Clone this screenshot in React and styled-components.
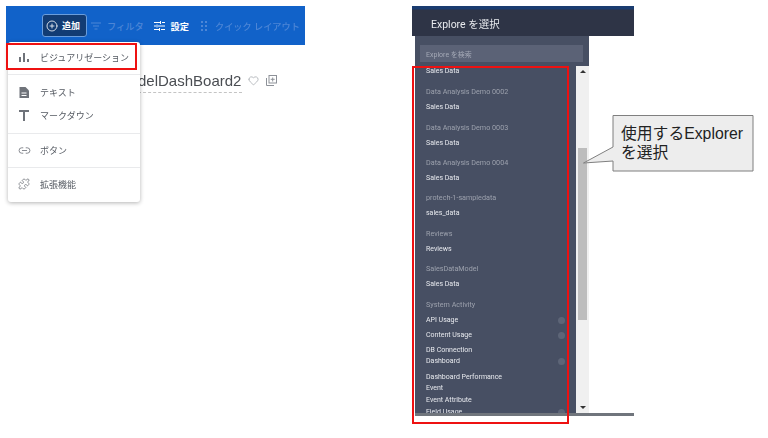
import React from "react";
import styled, { createGlobalStyle } from "styled-components";
import { CirclePlus, Link2, Puzzle, Heart } from "lucide-react";

const Global = createGlobalStyle`
  html, body { margin: 0; padding: 0; background: #fff; }
  body { font-family: Roboto, "Noto Sans CJK JP", sans-serif; }
`;
const Slide = styled.div`
  position: relative; width: 768px; height: 438px; overflow: hidden; background: #fff;
  display: flex; align-items: flex-start; padding-top: 6px; box-sizing: border-box;
`;
const LeftShot = styled.section`
  position: relative; width: 299px; margin-left: 6px; flex: none; filter: blur(.3px);
`;
const Toolbar = styled.div`
  height: 39px; background: #1162c9; display: flex; align-items: center;
  padding: 0 0 0 36px; box-sizing: border-box;
`;
const AddButton = styled.div`
  width: 45px; height: 23px; box-sizing: border-box; background: #123c74; border: 1px solid #6a9ddc; border-radius: 3px;
  display: flex; align-items: center; gap: 4px; padding-left: 3px; color: #fff; font-size: 9px; font-weight: 700;
  margin-right: 4px;
`;
const ToolItem = styled.div`
  display: flex; align-items: center; flex: none; gap: ${p => p.$gap}px; margin-right: ${p => p.$mr}px;
  color: ${p => p.$on ? "#fff" : "#4d86d6"}; font-size: 9.2px; font-weight: ${p => p.$on ? 700 : 500};
  white-space: nowrap;
`;
const TitleRow = styled.div`
  display: flex; align-items: center; padding: 26px 0 0 132px; color: #4a4d52;
`;
const Title = styled.div`
  font-family: "Liberation Sans", sans-serif; font-size: 15px; line-height: 20px; padding-bottom: 1px;
  border-bottom: 1px dashed #c4c4c4; width: 104px; white-space: nowrap;
`;
const TitleIcons = styled.div`
  display: flex; align-items: center; gap: 7px; margin-left: 6px; color: #8d9198; margin-top: -3px;
`;
const Menu = styled.div`
  position: absolute; left: 2px; top: 36px; width: 132px; height: 160px; background: #fff; border-radius: 3px;
  box-shadow: 0 1px 4px rgba(0,0,0,.3); display: flex; flex-direction: column;
`;
const MenuGroup = styled.div`
  display: flex; flex-direction: column; padding: ${p => p.$pad}; gap: 5px;
  & + & { border-top: 1px solid #e9eaec; }
`;
const MenuItem = styled.div`
  height: 18px; display: flex; align-items: center; color: #555a62; font-size: 9px; white-space: nowrap;
`;
const MenuIcon = styled.span`
  width: 32px; flex: none; display: flex; justify-content: center; color: #6f737a;
`;
const RedBox = styled.div`
  position: absolute; border: 2px solid #ee1111; box-sizing: border-box; pointer-events: none;
  left: ${p => p.$l}px; top: ${p => p.$t}px; width: ${p => p.$w}px; height: ${p => p.$h}px;
`;
const RightShot = styled.section`
  width: 222px; margin-left: 107px; flex: none; position: relative; height: 410px; filter: blur(.3px);
`;
const ModalHeader = styled.div`
  height: 30px; background: linear-gradient(#1a3c70 0, #1a3c70 3px, #2e3446 4px); color: #e8eaee;
  font-size: 10.5px; display: flex; align-items: center; padding: 4px 0 0 19px; box-sizing: border-box;
`;
const Body = styled.div`
  margin-left: 3px; width: 174px; height: 377px; background: #474f63; display: flex; flex-direction: column;
`;
const SearchArea = styled.div`
  height: 30px; flex: none; padding: 9px 6px 4px 5px; box-sizing: border-box;
`;
const Search = styled.div`
  height: 17px; background: #5b6276; color: #a4a9b6; font-size: 7px; display: flex; align-items: center; padding-left: 6px;
`;
const ListWrap = styled.div`
  flex: 1; min-height: 0; display: flex;
`;
const List = styled.div`
  width: 161px; flex: none; overflow: hidden; padding-left: 11px; box-sizing: border-box; position: relative;
`;
const Row = styled.div`
  height: 14px; line-height: 14px; margin-top: ${p => p.$pitch - 14}px; font-size: ${p => p.$label ? 7.2 : 7}px;
  color: ${p => p.$label ? "#9ca1ad" : "#e7e9ee"}; white-space: nowrap; display: flex; justify-content: space-between; align-items: center;
  padding-right: 11px;
`;
const Dot = styled.span`
  width: 7px; height: 7px; border-radius: 50%; background: #5d6577;
`;
const Scroll = styled.div`
  width: 13px; flex: none; background: #f0f0f0; display: flex; flex-direction: column; align-items: center; position: relative;
`;
const Arrow = styled.span`
  position: absolute; left: 3.5px; ${p => p.$up ? "top: 4px" : "bottom: 4px"}; width: 0; height: 0;
  border-left: 3px solid transparent; border-right: 3px solid transparent;
  ${p => p.$up ? "border-bottom: 3px solid #333;" : "border-top: 3px solid #333;"}
`;
const Thumb = styled.div`
  position: absolute; left: 2px; top: 82px; width: 9px; height: 172px; background: #bdbdbd;
`;
const BottomBar = styled.div`
  height: 3px; margin-left: 3px; background: #70757c;
`;
const Callout = styled.div`
  position: absolute; left: 583px; top: 115px; width: 171px; height: 57px;
`;
const CalloutText = styled.div`
  position: absolute; left: 38px; top: 9px; font-family: "Liberation Sans", "Noto Sans CJK JP", sans-serif;
  font-size: 15.8px; line-height: 19px; color: #222; white-space: nowrap;
`;

const rows = [
  ["Sales Data", 0, 12],
  ["Data Analysis Demo 0002", 1, 21],
  ["Sales Data", 0, 15],
  ["Data Analysis Demo 0003", 1, 21],
  ["Sales Data", 0, 15],
  ["Data Analysis Demo 0004", 1, 20],
  ["Sales Data", 0, 15],
  ["protech-1-sampledata", 1, 20],
  ["sales_data", 0, 15],
  ["Reviews", 1, 21],
  ["Reviews", 0, 15],
  ["SalesDataModel", 1, 20],
  ["Sales Data", 0, 15],
  ["System Activity", 1, 21],
  ["API Usage", 0, 15, 1],
  ["Content Usage", 0, 15, 1],
  ["DB Connection", 0, 15],
  ["Dashboard", 0, 11, 1],
  ["Dashboard Performance", 0, 16],
  ["Event", 0, 11],
  ["Event Attribute", 0, 12],
  ["Field Usage", 0, 12, 1],
];

const DocIcon = () => (
  <svg width="12" height="13" viewBox="0 0 12 13"><path fill="#6f737a" d="M1.5 1h6L11 4.5V12H1.5z" /><path stroke="#fff" strokeWidth="1" d="M3.5 7h5M3.5 9.5h5" /></svg>
);
const FilterIcon = () => (
  <svg width="10" height="8" viewBox="0 0 10 8"><path stroke="#4d86d6" strokeWidth="1" d="M0 1h10M2 4h6M3.5 7h3" /></svg>
);
const SettingsIcon = () => (
  <svg width="11" height="10" viewBox="0 0 11 10" fill="none" stroke="#fff" strokeWidth="1"><path d="M0 1.5h6M8 1.5h3M0 5h2M4 5h7M0 8.5h5M7 8.5h4M6.5 0v3M3 3.5v3M5.5 7v3" /></svg>
);
const GripIcon = () => (
  <svg width="6" height="10" viewBox="0 0 6 10" fill="#4d86d6"><rect x="0" y="0" width="2" height="2" /><rect x="4" y="0" width="2" height="2" /><rect x="0" y="4" width="2" height="2" /><rect x="4" y="4" width="2" height="2" /><rect x="0" y="8" width="2" height="2" /><rect x="4" y="8" width="2" height="2" /></svg>
);
const BarsIcon = () => (
  <svg width="10" height="10" viewBox="0 0 10 10" fill="#6f737a"><rect x="0" y="5" width="2" height="5" /><rect x="4" y="1" width="2" height="9" /><rect x="8" y="7" width="2" height="3" /></svg>
);
const TIcon = () => (
  <svg width="10" height="11" viewBox="0 0 10 11" fill="#6f737a"><path d="M0 0h10v2H6v9H4V2H0z" /></svg>
);
const CopyIcon = () => (
  <svg width="11" height="11" viewBox="0 0 11 11" fill="none" stroke="#8d9198"><rect x="3" y=".5" width="7.5" height="7.5" /><path d="M.5 3v7.5H8M6.7 2.5v4M4.7 4.3h4" /></svg>
);

export default function App() {
  return (
    <Slide>
      <Global />
      <LeftShot>
        <Toolbar>
          <AddButton><CirclePlus size={12} strokeWidth={1.6} />追加</AddButton>
          <ToolItem $gap={6} $mr={10}><FilterIcon />フィルタ</ToolItem>
          <ToolItem $on $gap={6} $mr={12}><SettingsIcon />設定</ToolItem>
          <ToolItem $gap={8} $mr={0}><GripIcon />クイック レイアウト</ToolItem>
        </Toolbar>
        <TitleRow>
          <Title>delDashBoard2</Title>
          <TitleIcons><Heart size={11} strokeWidth={1.3} /><CopyIcon /></TitleIcons>
        </TitleRow>
        <Menu>
          <MenuGroup $pad="6px 0 8px">
            <MenuItem><MenuIcon><BarsIcon /></MenuIcon>ビジュアリゼーション</MenuItem>
          </MenuGroup>
          <MenuGroup $pad="8px 0 9px">
            <MenuItem><MenuIcon><DocIcon /></MenuIcon>テキスト</MenuItem>
            <MenuItem><MenuIcon><TIcon /></MenuIcon>マークダウン</MenuItem>
          </MenuGroup>
          <MenuGroup $pad="7px 0 8px">
            <MenuItem><MenuIcon><Link2 size={13} strokeWidth={1.5} /></MenuIcon>ボタン</MenuItem>
          </MenuGroup>
          <MenuGroup $pad="7px 0">
            <MenuItem><MenuIcon><Puzzle size={12} strokeWidth={1.5} /></MenuIcon>拡張機能</MenuItem>
          </MenuGroup>
        </Menu>
      </LeftShot>
      <RightShot>
        <ModalHeader>Explore を選択</ModalHeader>
        <Body>
          <SearchArea><Search>Explore を検索</Search></SearchArea>
          <ListWrap>
            <List>
              {rows.map(([t, label, pitch, dot], i) => (
                <Row key={i} $label={!!label} $pitch={pitch}>
                  {t}{dot ? <Dot /> : null}
                </Row>
              ))}
            </List>
            <Scroll><Arrow $up /><Thumb /><Arrow /></Scroll>
          </ListWrap>
        </Body>
        <BottomBar />
      </RightShot>
      <RedBox $l={6} $t={43} $w={131} $h={27} />
      <RedBox $l={412} $t={66} $w={157} $h={358} />
      <Callout>
        <svg width="171" height="57" viewBox="0 0 171 57">
          <path d="M30 .5H170V56H30V46L.5 48 30 32z" fill="#ededed" stroke="#7f7f7f" strokeWidth="1" />
        </svg>
        <CalloutText>使用するExplorer<br />を選択</CalloutText>
      </Callout>
    </Slide>
  );
}
